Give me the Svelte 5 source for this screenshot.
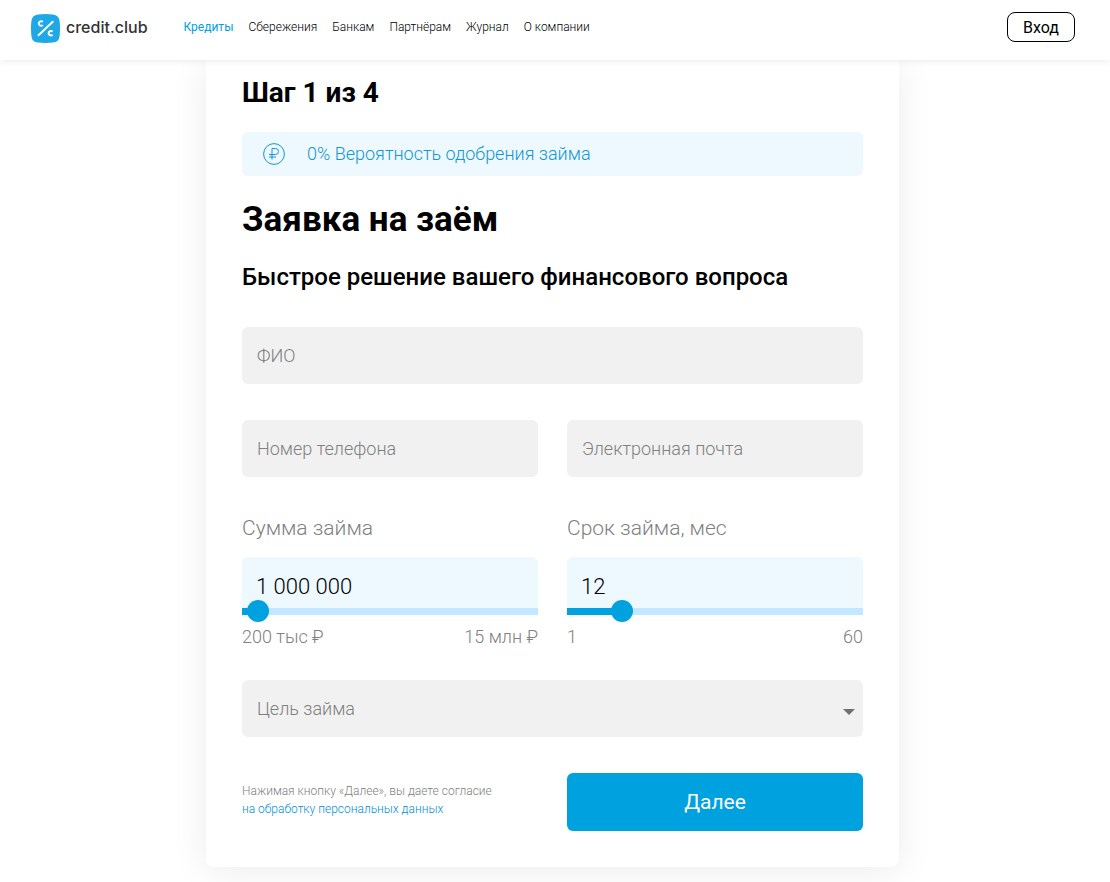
<script>
  const links = ['Кредиты', 'Сбережения', 'Банкам', 'Партнёрам', 'Журнал', 'О компании'];

  let amount = $state(1000000);
  let term = $state(12);

  const share = (value, min, max) => ((value - min) / (max - min)) * 100;
  const spaced = (value) => String(value).replace(/\B(?=(\d{3})+$)/g, ' ');
  const digits = (text) => Number(text.replace(/\D/g, ''));
</script>

<header>
  <a class="logo" href="#home">
    <svg viewBox="0 0 29 29" aria-hidden="true">
      <path d="M7 .4Q14.500-.4 22 .4 28 1 28.600 7 29.400 14.500 28.600 22 28 28 22 28.600 14.500 29.400 7 28.600 1 28 .4 22-.4 14.500.4 7 1 1 7 .4Z" fill="#1ea8e6" />
      <g fill="none" stroke="#fff" stroke-width="2">
        <path d="M22.300 7.300 7 21.700" />
        <path d="M11.800 7.900A2.300 2.300 0 1 0 11.800 11.100" />
        <path d="M21.600 17.600A2.300 2.300 0 1 0 21.600 20.800" />
      </g>
    </svg>
    <span>credit.club</span>
  </a>
  <nav>
    {#each links as link, i}
      <a href="#{i}" class:active={i === 0}>{link}</a>
    {/each}
  </nav>
  <button class="login" type="button">Вход</button>
</header>

<main>
  <form class="card" onsubmit={(event) => event.preventDefault()}>
    <p class="step">Шаг 1 из 4</p>
    <div class="chance">
      <svg viewBox="0 0 22 22" fill="none" stroke="currentColor" aria-hidden="true">
        <circle cx="11" cy="11" r="10.400" />
        <path d="M9 16.500V5.500h3.500a3 3 0 0 1 0 6H6M6 14h7" />
      </svg>
      <span>0% Вероятность одобрения займа</span>
    </div>
    <h1>Заявка на заём</h1>
    <h2>Быстрое решение вашего финансового вопроса</h2>

    <div class="fields">
      <input class="box wide" type="text" placeholder="ФИО" aria-label="ФИО" />
      <input class="box" type="tel" placeholder="Номер телефона" aria-label="Номер телефона" />
      <input class="box" type="email" placeholder="Электронная почта" aria-label="Электронная почта" />

      <div class="slider">
        <label for="amount">Сумма займа</label>
        <input
          class="value"
          id="amount"
          type="text"
          value={spaced(amount)}
          onchange={(event) => (amount = digits(event.currentTarget.value))}
        />
        <div class="track" style="--share: {share(amount, 200000, 15000000)}%">
          <input type="range" min="200000" max="15000000" step="100000" bind:value={amount} aria-label="Сумма займа" />
        </div>
        <div class="limits"><span>200 тыс ₽</span><span>15 млн ₽</span></div>
      </div>

      <div class="slider">
        <label for="term">Срок займа, мес</label>
        <input
          class="value"
          id="term"
          type="text"
          value={term}
          onchange={(event) => (term = digits(event.currentTarget.value))}
        />
        <div class="track" style="--share: {share(term, 1, 60)}%">
          <input type="range" min="1" max="60" bind:value={term} aria-label="Срок займа, мес" />
        </div>
        <div class="limits"><span>1</span><span>60</span></div>
      </div>

      <div class="choice wide">
        <select class="box" aria-label="Цель займа">
          <option>Цель займа</option>
        </select>
      </div>

      <p class="consent">
        Нажимая кнопку «Далее», вы даете согласие
        <a href="#consent">на обработку персональных данных</a>
      </p>
      <button class="next" type="submit">Далее</button>
    </div>
  </form>
</main>

<style>
  :global(body) {
    margin: 0;
    background: #fff;
    font-family: Roboto, 'Liberation Sans', sans-serif;
    font-weight: 300;
    color: #000;
  }

  input,
  select,
  button {
    box-sizing: border-box;
    margin: 0;
    border: 0;
    font: inherit;
  }

  a {
    color: inherit;
    text-decoration: none;
  }

  header {
    position: sticky;
    top: 0;
    z-index: 2;
    box-sizing: border-box;
    height: 60px;
    padding: 0 35px 6px 31px;
    display: flex;
    align-items: center;
    background: #fff;
    box-shadow: 0 0 8px rgba(0, 0, 0, 0.1);
  }

  .logo {
    display: flex;
    align-items: center;
    gap: 6px;
    padding-top: 3px;
    font: 500 16px/20px Inter, sans-serif;
    color: #333;
  }

  .logo svg {
    width: 29px;
    height: 29px;
  }

  .logo span {
    padding-bottom: 3px;
  }

  nav {
    display: flex;
    gap: 15px;
    margin-left: 36px;
    font-size: 12px;
    line-height: 20px;
    color: #000;
  }

  .active {
    color: #00a1df;
    font-weight: 400;
  }

  .login {
    width: 68px;
    height: 30px;
    margin-left: auto;
    padding: 0;
    border: 1px solid #000;
    border-radius: 8px;
    background: #fff;
    color: #000;
    font-size: 16px;
    font-weight: 400;
  }

  main {
    padding: 0 5px 15px 0;
  }

  .card {
    box-sizing: border-box;
    max-width: 693px;
    margin: 0 auto;
    padding: 15px 36px 36px;
    border-radius: 0 0 8px 8px;
    background: #fff;
    box-shadow: 0 4px 36px rgba(0, 0, 0, 0.08);
  }

  .step {
    margin: 0 0 21px;
    font-size: 28px;
    line-height: 36px;
    font-weight: 700;
  }

  .chance {
    height: 44px;
    padding: 0 21px;
    display: flex;
    align-items: center;
    gap: 22px;
    border-radius: 6px;
    background: #edf8ff;
    color: #1497d4;
    font-size: 18px;
    line-height: 20px;
  }

  .chance svg {
    width: 22px;
    height: 22px;
  }

  h1 {
    margin: 22px 0 0;
    font-size: 35px;
    line-height: 44px;
    font-weight: 700;
  }

  h2 {
    margin: 19px 0 34px;
    font-size: 24px;
    line-height: 32px;
    font-weight: 500;
  }

  .fields {
    display: grid;
    grid-template-columns: 1fr 1fr;
    gap: 36px 29px;
  }

  .wide {
    grid-column: 1 / -1;
  }

  .box {
    width: 100%;
    height: 57px;
    padding: 0 15px;
    border-radius: 6px;
    background: #f1f1f1;
    color: #808080;
    font-size: 18px;
    appearance: none;
  }

  .box::placeholder {
    color: #808080;
    opacity: 1;
  }

  .slider {
    display: flex;
    flex-direction: column;
  }

  .slider label {
    margin-bottom: 14px;
    color: #808080;
    font-size: 21px;
    line-height: 30px;
  }

  .value {
    width: 100%;
    height: 51px;
    padding: 7px 14px 0;
    border-radius: 6px 6px 0 0;
    background: #edf8ff;
    color: #000;
    font-size: 22px;
  }

  .track {
    display: flex;
    height: 7px;
    background: linear-gradient(to right, #00a1df var(--share), #c2e8ff var(--share));
  }

  .track input {
    flex: 1;
    height: 22px;
    margin: -8px -11px;
    background: none;
    appearance: none;
  }

  .track input::-webkit-slider-thumb {
    width: 22px;
    height: 22px;
    border-radius: 50%;
    background: #00a1df;
    appearance: none;
  }

  .limits {
    display: flex;
    justify-content: space-between;
    margin-top: 9px;
    color: #808080;
    font-size: 18px;
    line-height: 26px;
  }

  .choice {
    position: relative;
    margin-top: -6px;
  }

  .choice::after {
    content: '';
    position: absolute;
    top: 29px;
    right: 8px;
    border: 6px solid transparent;
    border-top-color: #707070;
    border-bottom: 0;
    pointer-events: none;
  }

  .consent {
    margin: 9px 0 0;
    color: #808080;
    font-size: 12px;
    line-height: 18px;
  }

  .consent a {
    display: block;
    color: #0090d6;
  }

  .next {
    height: 58px;
    padding: 0;
    border-radius: 6px;
    background: #00a1df;
    color: #fff;
    font-size: 21px;
    font-weight: 400;
  }
</style>
